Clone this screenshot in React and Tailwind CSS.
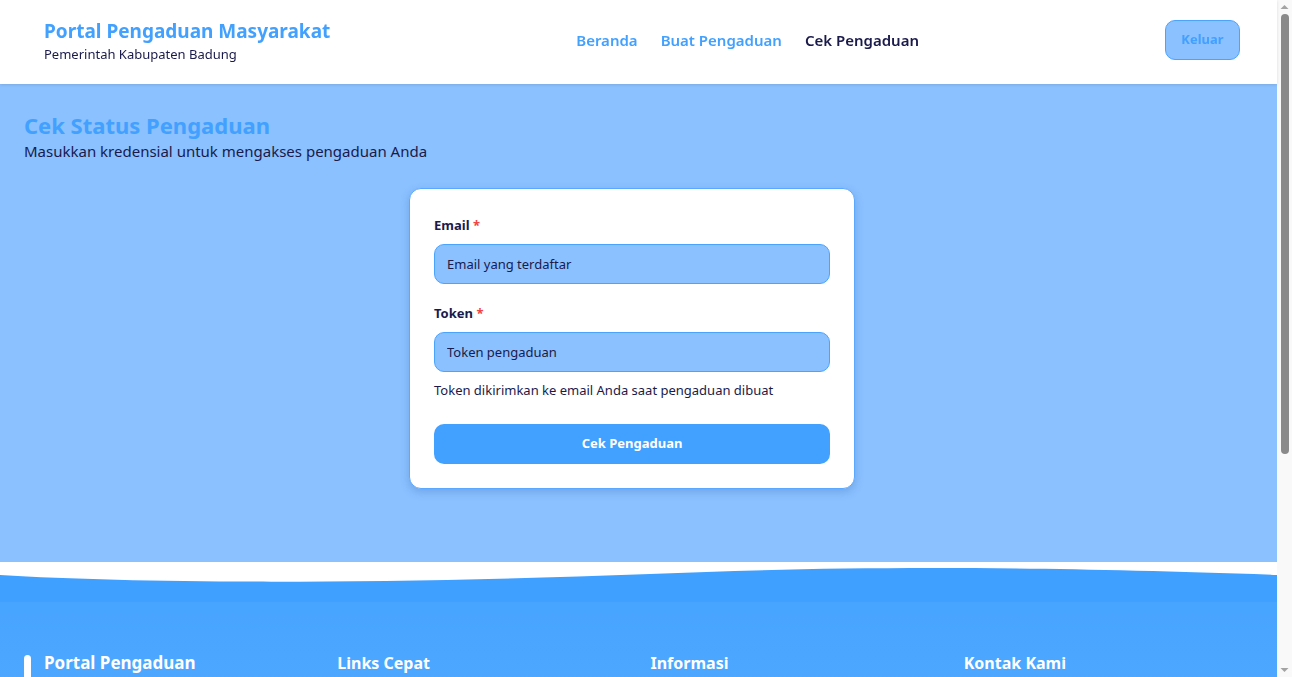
import React, { useState } from 'react';

const font = { fontFamily: '"Noto Sans", "Open Sans", sans-serif' };

const Header = () => (
  <header className="bg-white h-[84px] pb-[4px] flex items-center justify-between pl-[44px] pr-[37px] shadow-[0_1px_3px_rgba(0,0,0,0.12)] relative z-10">
    <div className="mt-[2px]">
      <h1 className="text-[19px] leading-[24px] font-bold text-[#42a0ff]">Portal Pengaduan Masyarakat</h1>
      <p className="text-[13px] leading-[18px] text-[#1a1a4b] mt-[2px]">Pemerintah Kabupaten Badung</p>
    </div>
    <nav className="flex items-center gap-[23px] text-[15px] font-semibold">
      <a className="text-[#42a0ff]">Beranda</a>
      <a className="text-[#42a0ff]">Buat Pengaduan</a>
      <a className="text-[#1a1a4b]">Cek Pengaduan</a>
    </nav>
    <button className="w-[75px] h-[40px] rounded-[10px] bg-[#8bc1ff] border border-[#4aa3ff] text-[#42a0ff] text-[13px] font-bold">
      Keluar
    </button>
  </header>
);

const Field = ({ label, placeholder, value, onChange, type }) => (
  <div>
    <label className="block text-[13px] leading-[18px] font-bold text-[#1a1a4b]">
      {label} <span className="text-[#ef4444]">*</span>
    </label>
    <input
      type={type}
      placeholder={placeholder}
      value={value}
      onChange={onChange}
      className="mt-[10px] w-full h-[40px] rounded-[10px] bg-[#8bc1ff] border border-[#4aa3ff] px-[12px] text-[13px] text-[#1a1a4b] placeholder:text-[#1a1a4b] focus:outline-none"
    />
  </div>
);

const Wave = () => (
  <div className="bg-white h-[40px]">
    <svg className="block w-full h-[40px]" viewBox="0 0 1277 40" preserveAspectRatio="none">
      <path d="M0,13 C150,22 380,22 650,12 C820,5 1000,3 1277,13 L1277,40 L0,40 Z" fill="#3fa0ff" />
    </svg>
  </div>
);

const FooterCol = ({ title, bar, children }) => (
  <div>
    <div className="flex items-start gap-[13px]">
      {bar && <span className="w-[7px] h-[40px] bg-white rounded-t-full" />}
      <h3 className={`font-bold text-white leading-[16px] ${bar ? 'text-[17px]' : 'text-[16px]'}`}>{title}</h3>
    </div>
    <div className="mt-4 space-y-2 text-[14px] text-white/90">{children}</div>
  </div>
);

const Footer = () => (
  <footer className="bg-gradient-to-b from-[#47a4ff] to-[#5aafff] px-6 pt-[53px] pb-10">
    <div className="grid grid-cols-4 gap-6">
      <FooterCol title="Portal Pengaduan" bar>
        <p>Layanan pengaduan masyarakat Pemerintah Kabupaten Badung.</p>
      </FooterCol>
      <FooterCol title="Links Cepat">
        <p>Beranda</p>
        <p>Buat Pengaduan</p>
        <p>Cek Pengaduan</p>
      </FooterCol>
      <FooterCol title="Informasi">
        <p>Tentang Kami</p>
        <p>Kebijakan Privasi</p>
        <p>Syarat &amp; Ketentuan</p>
      </FooterCol>
      <FooterCol title="Kontak Kami">
        <p>Jl. Raya Sempidi, Mangupura</p>
        <p>(0361) 123456</p>
        <p>pengaduan@badungkab.go.id</p>
      </FooterCol>
    </div>
    <div className="mt-10 border-t border-white/30 pt-6 text-center text-[13px] text-white/90">
      © 2024 Pemerintah Kabupaten Badung. Hak cipta dilindungi.
    </div>
  </footer>
);

// browser scrollbar as seen in the screenshot
const Scrollbar = () => (
  <div className="fixed top-0 right-0 w-[15px] h-screen bg-[#f9f9f9] flex flex-col items-center">
    <svg width="15" height="14" viewBox="0 0 15 14" className="shrink-0">
      <path d="M3.5,9 L7.5,5 L11.5,9 Z" fill="#a3a3a3" />
    </svg>
    <div className="w-[8px] h-[440px] rounded-full bg-[#8a8a8a]" />
    <div className="flex-1" />
    <svg width="15" height="14" viewBox="0 0 15 14" className="shrink-0">
      <path d="M3.5,5 L7.5,9 L11.5,5 Z" fill="#a3a3a3" />
    </svg>
  </div>
);

export default function App() {
  const [email, setEmail] = useState('');
  const [token, setToken] = useState('');

  return (
    <div style={font} className="min-h-screen bg-white">
      <div className="mr-[15px]">
        <Header />

        <main className="bg-[#8bc1ff] px-6 pt-[27px] pb-[73px]">
          <h2 className="text-[22px] leading-[28px] font-bold text-[#42a0ff]">Cek Status Pengaduan</h2>
          <p className="text-[15px] leading-[22px] text-[#1a1a4b] mt-[1px]">Masukkan kredensial untuk mengakses pengaduan Anda</p>

          <div className="mt-[26px] ml-[385px] w-[446px] bg-white rounded-[12px] border border-[#5aa8ff] shadow-[0_3px_8px_rgba(30,80,160,0.25)] px-6 pt-[27px] pb-6">
            <form className="flex flex-col" onSubmit={(e) => e.preventDefault()}>
              <Field label="Email" type="email" placeholder="Email yang terdaftar" value={email} onChange={(e) => setEmail(e.target.value)} />
              <div className="mt-[20px]">
                <Field label="Token" type="text" placeholder="Token pengaduan" value={token} onChange={(e) => setToken(e.target.value)} />
                <p className="mt-[9px] text-[13px] leading-[18px] text-[#1a1a4b]">Token dikirimkan ke email Anda saat pengaduan dibuat</p>
              </div>
              <button type="submit" className="mt-[25px] w-full h-[40px] rounded-[10px] bg-[#42a0ff] text-white text-[13px] font-bold">
                Cek Pengaduan
              </button>
            </form>
          </div>
        </main>

        <Wave />
        <Footer />
      </div>
      <Scrollbar />
    </div>
  );
}
